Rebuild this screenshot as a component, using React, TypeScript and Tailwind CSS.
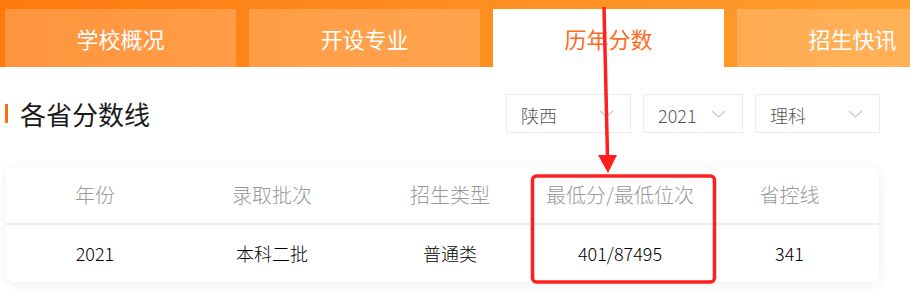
const tabs = ["学校概况", "开设专业", "历年分数", "招生快讯"];
const columns = ["年份", "录取批次", "招生类型", "最低分/最低位次", "省控线"];
const row = ["2021", "本科二批", "普通类", "401/87495", "341"];

function Chevron() {
  return (
    <svg width="15" height="8" viewBox="0 0 15 8" fill="none">
      <path d="M1 1l6.5 6L14 1" stroke="#c8c8c8" strokeWidth="1.2" />
    </svg>
  );
}

function Select({ label, width }: { label: string; width: string }) {
  return (
    <div
      className={`${width} h-[39px] border border-[#ececec] flex items-center justify-between pl-[14px] pr-[16px] text-[18px] text-[#555]`}
    >
      <span className="pt-[4px]">{label}</span>
      <Chevron />
    </div>
  );
}

export default function App() {
  return (
    <div
      className="relative w-[910px] h-[301px] overflow-hidden bg-white font-light"
      style={{ fontFamily: '"Noto Sans CJK SC", "Noto Sans", sans-serif' }}
    >
      <nav className="h-[67px] pt-[9px] pl-[5px] flex gap-[13px] bg-gradient-to-r from-[#ff7a0c] to-[#ff9e2e] font-normal">
        {tabs.map((t, i) =>
          i === 2 ? (
            <div
              key={t}
              className="w-[231px] shrink-0 h-[58px] bg-white flex items-center justify-center text-[22px] text-[#ff6a22]"
            >
              {t}
            </div>
          ) : (
            <div
              key={t}
              className="w-[231px] shrink-0 h-[58px] bg-white/20 flex items-center justify-center text-[22px] text-white"
            >
              {t}
            </div>
          )
        )}
      </nav>

      <div className="flex items-center justify-between pt-[27px] pl-[5px] pr-[30px]">
        <div className="flex items-center gap-[12px]">
          <div className="w-[3px] h-[19px] bg-[#ff6a10]" />
          <h2 className="text-[26px] leading-none text-[#1a1a1a] font-normal">各省分数线</h2>
        </div>
        <div className="flex gap-[12px]">
          <Select label="陕西" width="w-[125px]" />
          <Select label="2021" width="w-[100px]" />
          <Select label="理科" width="w-[125px]" />
        </div>
      </div>

      <div className="mt-[34px] ml-[6px] w-[873px] rounded-[8px] bg-white shadow-[0_2px_12px_rgba(0,0,0,0.08)]">
        <div className="grid grid-cols-[178px_176px_180px_160px_179px] h-[58px] border-b-2 border-[#ededed] items-center text-center text-[20px] text-[#999]">
          {columns.map((c) => (
            <div key={c}>{c}</div>
          ))}
        </div>
        <div className="grid grid-cols-[178px_176px_180px_160px_179px] h-[57px] items-center text-center text-[18px] text-black">
          {row.map((c, i) => (
            <div key={i}>{c}</div>
          ))}
        </div>
      </div>

      <svg
        className="absolute left-0 top-0 pointer-events-none"
        width="910"
        height="301"
        viewBox="0 0 910 301"
      >
        <line x1="604" y1="7" x2="607.5" y2="157" stroke="#ff1f1f" strokeWidth="3.5" />
        <polygon points="598,155 617,155 608,173" fill="#ff1f1f" />
        <rect
          x="532.5"
          y="176"
          width="182"
          height="106"
          rx="4"
          fill="none"
          stroke="#ff1f1f"
          strokeWidth="3.5"
        />
      </svg>
    </div>
  );
}
